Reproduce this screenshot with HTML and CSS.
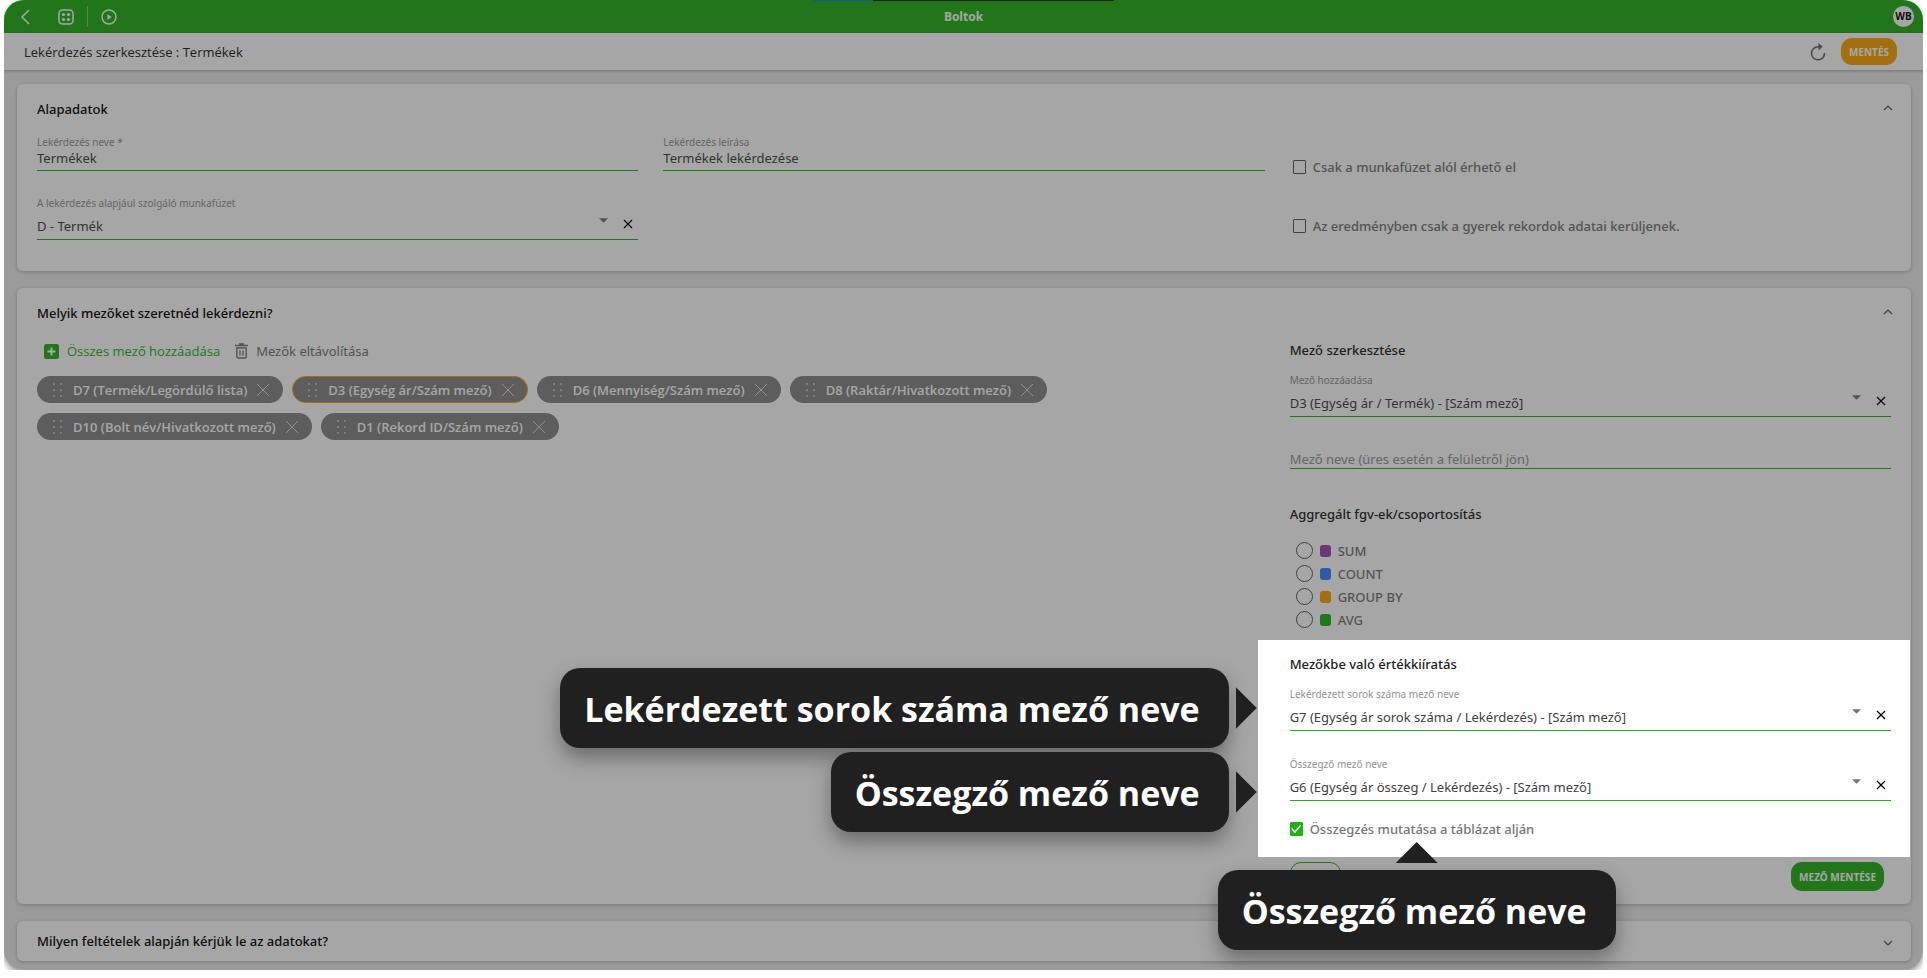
FILE: index.html
```
<!DOCTYPE html>
<html lang="hu">
<head>
<meta charset="utf-8">
<title>Boltok</title>
<link rel="stylesheet" href="styles.css">
</head>
<body>
<svg class="defs" aria-hidden="true">
  <symbol id="cross" viewBox="0 0 14 14"><path d="M1 1l12 12M13 1L1 13" fill="none" stroke="currentColor"/></symbol>
  <symbol id="clear" viewBox="0 0 10 10"><path d="M1 1l8 8M9 1L1 9" fill="none" stroke="currentColor" stroke-width="1.3"/></symbol>
  <symbol id="up" viewBox="0 0 10 7"><path d="M1 6l4-4 4 4" fill="none" stroke="currentColor" stroke-width="1.2"/></symbol>
  <symbol id="down" viewBox="0 0 10 7"><path d="M1 1l4 4 4-4" fill="none" stroke="currentColor" stroke-width="1.2"/></symbol>
  <symbol id="caret" viewBox="0 0 10 5"><path d="M0 0h10L5 5z" fill="currentColor"/></symbol>
  <symbol id="grip" viewBox="0 0 10 16"><path d="M0 1h2v2H0zM7 1h2v2H7zM0 7h2v2H0zM7 7h2v2H7zM0 13h2v2H0zM7 13h2v2H7z" fill="currentColor"/></symbol>
</svg>
<div class="frame">
  <div class="strip"></div>
  <header class="topbar">
    <nav class="topbar-nav">
      <button class="icon-btn back" type="button"><svg width="10" height="16" viewBox="0 0 10 16"><path d="M9 1L2 8l7 7" fill="none" stroke="currentColor" stroke-width="1.5"/></svg></button>
      <button class="icon-btn apps" type="button"><svg width="16" height="16" viewBox="0 0 16 16"><rect x="1" y="1" width="14" height="14" rx="3.500" fill="none" stroke="currentColor" stroke-width="1.5"/><g fill="currentColor"><circle cx="5.500" cy="5.500" r="1.600"/><circle cx="10.500" cy="5.500" r="1.600"/><circle cx="5.500" cy="10.500" r="1.600"/><circle cx="10.500" cy="10.500" r="1.600"/></g></svg></button>
      <button class="icon-btn play" type="button"><svg width="16" height="16" viewBox="0 0 16 16"><circle cx="8" cy="8" r="7" fill="none" stroke="currentColor" stroke-width="1.5"/><path d="M6.500 5l4 3-4 3z" fill="currentColor"/></svg></button>
    </nav>
    <h1 class="topbar-title">Boltok</h1>
    <button class="avatar" type="button">WB</button>
  </header>
  <div class="subbar">
    <h2 class="subbar-title">Lekérdezés szerkesztése : Termékek</h2>
    <div class="subbar-actions">
      <button class="icon-btn" type="button"><svg width="16" height="18" viewBox="0 0 16 18"><path d="M10.500 3.800H8A6.500 6.500 0 1 0 14.500 10" fill="none" stroke="currentColor" stroke-width="1.600"/><path d="M8.500 0l4.200 3.800-4.200 3.800z" fill="currentColor"/></svg></button>
      <button class="btn btn-save" type="button">MENTÉS</button>
    </div>
  </div>
  <main class="page">
    <section class="card">
      <header class="card-head"><h3 class="card-title">Alapadatok</h3><button class="icon-btn toggle" type="button"><svg width="10" height="7"><use href="#up"/></svg></button></header>
      <div class="columns base">
        <div class="field"><label class="label" for="name">Lekérdezés neve *</label><input class="text" id="name" value="Termékek"></div>
        <div class="field"><label class="label" for="desc">Lekérdezés leírása</label><input class="text" id="desc" value="Termékek lekérdezése"></div>
        <div class="checks">
          <label class="check"><input type="checkbox">Csak a munkafüzet alól érhető el</label>
          <label class="check"><input type="checkbox">Az eredményben csak a gyerek rekordok adatai kerüljenek.</label>
        </div>
        <div class="field">
          <label class="label" for="book">A lekérdezés alapjául szolgáló munkafüzet</label>
          <div class="picker"><select id="book"><option>D - Termék</option></select><svg class="caret" width="9" height="5"><use href="#caret"/></svg><button class="clear" type="button"><svg width="10" height="10"><use href="#clear"/></svg></button></div>
        </div>
      </div>
    </section>

    <section class="card">
      <header class="card-head"><h3 class="card-title">Melyik mezőket szeretnéd lekérdezni?</h3><button class="icon-btn toggle" type="button"><svg width="10" height="7"><use href="#up"/></svg></button></header>
      <div class="columns">
        <div class="chosen">
          <div class="actions">
            <button class="action add" type="button"><svg width="15" height="15" viewBox="0 0 15 15"><rect width="15" height="15" rx="2.500" fill="currentColor"/><path class="plus" d="M7.500 3.500v8M3.500 7.500h8" stroke-width="2"/></svg>Összes mező hozzáadása</button>
            <button class="action" type="button"><svg width="13" height="16" viewBox="0 0 13 16"><path d="M0 2.500h13M4 1h5M1.800 5h9.400v8.500a1.500 1.500 0 0 1-1.500 1.500h-6.400a1.500 1.500 0 0 1-1.500-1.500zM5 7.500v5M8 7.500v5" fill="none" stroke="currentColor" stroke-width="1.400"/></svg>Mezők eltávolítása</button>
          </div>
          <ul class="chips">
            <li class="chip"><svg class="grip" width="10" height="16"><use href="#grip"/></svg>D7 (Termék/Legördülő lista)<button class="remove" type="button"><svg width="14" height="14"><use href="#cross"/></svg></button></li>
            <li class="chip chip-active"><svg class="grip" width="10" height="16"><use href="#grip"/></svg>D3 (Egység ár/Szám mező)<button class="remove" type="button"><svg width="14" height="14"><use href="#cross"/></svg></button></li>
            <li class="chip"><svg class="grip" width="10" height="16"><use href="#grip"/></svg>D6 (Mennyiség/Szám mező)<button class="remove" type="button"><svg width="14" height="14"><use href="#cross"/></svg></button></li>
            <li class="chip"><svg class="grip" width="10" height="16"><use href="#grip"/></svg>D8 (Raktár/Hivatkozott mező)<button class="remove" type="button"><svg width="14" height="14"><use href="#cross"/></svg></button></li>
            <li class="chip"><svg class="grip" width="10" height="16"><use href="#grip"/></svg>D10 (Bolt név/Hivatkozott mező)<button class="remove" type="button"><svg width="14" height="14"><use href="#cross"/></svg></button></li>
            <li class="chip"><svg class="grip" width="10" height="16"><use href="#grip"/></svg>D1 (Rekord ID/Szám mező)<button class="remove" type="button"><svg width="14" height="14"><use href="#cross"/></svg></button></li>
          </ul>
        </div>
        <div class="editor">
          <h4 class="group-title">Mező szerkesztése</h4>
          <div class="field first">
            <label class="label" for="add">Mező hozzáadása</label>
            <div class="picker"><select id="add"><option>D3 (Egység ár / Termék) - [Szám mező]</option></select><svg class="caret" width="9" height="5"><use href="#caret"/></svg><button class="clear" type="button"><svg width="10" height="10"><use href="#clear"/></svg></button></div>
          </div>
          <input class="text rename" placeholder="Mező neve (üres esetén a felületről jön)">
          <h4 class="group-title">Aggregált fgv-ek/csoportosítás</h4>
          <div class="radios">
            <label class="radio"><input type="radio" name="agg"><span class="swatch sum"></span>SUM</label>
            <label class="radio"><input type="radio" name="agg"><span class="swatch count"></span>COUNT</label>
            <label class="radio"><input type="radio" name="agg"><span class="swatch group"></span>GROUP BY</label>
            <label class="radio"><input type="radio" name="agg"><span class="swatch avg"></span>AVG</label>
          </div>
          <section class="spotlight">
            <h4 class="group-title">Mezőkbe való értékkiíratás</h4>
            <div class="field first">
              <label class="label" for="rows">Lekérdezett sorok száma mező neve</label>
              <div class="picker"><select id="rows"><option>G7 (Egység ár sorok száma / Lekérdezés) - [Szám mező]</option></select><svg class="caret" width="9" height="5"><use href="#caret"/></svg><button class="clear" type="button"><svg width="10" height="10"><use href="#clear"/></svg></button></div>
            </div>
            <div class="field second">
              <label class="label" for="total">Összegző mező neve</label>
              <div class="picker"><select id="total"><option>G6 (Egység ár összeg / Lekérdezés) - [Szám mező]</option></select><svg class="caret" width="9" height="5"><use href="#caret"/></svg><button class="clear" type="button"><svg width="10" height="10"><use href="#clear"/></svg></button></div>
            </div>
            <label class="check show-total"><input type="checkbox" checked>Összegzés mutatása a táblázat alján</label>
            <div class="callout callout-rows">Lekérdezett sorok száma mező neve</div>
            <div class="callout callout-total">Összegző mező neve</div>
            <div class="callout callout-below">Összegző mező neve</div>
          </section>
          <div class="buttons"><button class="btn btn-outline" type="button"></button><button class="btn btn-field" type="button">MEZŐ MENTÉSE</button></div>
        </div>
      </div>
    </section>

    <section class="card">
      <header class="card-head closed"><h3 class="card-title">Milyen feltételek alapján kérjük le az adatokat?</h3><button class="icon-btn toggle" type="button"><svg width="10" height="7"><use href="#down"/></svg></button></header>
    </section>
  </main>
</div>
</body>
</html>
```
FILE: styles.css
```
:root {
  --green: #22b014;
  --orange: #fca303;
  --ink: #202020;
  --muted: #757575;
}
* { box-sizing: border-box; }
body {
  margin: 0 4px 8px;
  background: #fff;
  color: #000;
  font: 500 13px/20px "Noto Sans", "Open Sans", sans-serif;
}
h1, h2, h3, h4, ul { margin: 0; padding: 0; font: inherit; }
button, input, select { font: inherit; color: inherit; margin: 0; padding: 0; border: 0; background: none; border-radius: 0; }
svg { display: block; flex: none; }
.defs { position: absolute; width: 0; height: 0; }

.frame {
  position: relative;
  overflow: hidden;
  border-radius: 20px;
  background: #ededed;
  box-shadow: 0 3px 6px rgba(0, 0, 0, .45);
}
.strip {
  position: absolute;
  z-index: 6;
  top: 0;
  left: 50%;
  width: 301px;
  height: 1px;
  margin-left: -151px;
  background: linear-gradient(to right, #12589c 60px, var(--ink) 60px);
}

/* Top bars */
.topbar {
  display: grid;
  grid-template-columns: 1fr auto 1fr;
  align-items: center;
  height: 33px;
  padding: 0 9px;
  background: var(--green);
  color: #fff;
}
.topbar-nav { display: flex; align-items: center; height: 21px; padding-left: 7px; }
.topbar-title { font: 700 12px/20px "Open Sans", sans-serif; }
.icon-btn { display: flex; align-items: center; justify-content: center; }
.apps { margin-left: 28px; }
.play { margin-left: 13px; padding-left: 13px; height: 21px; border-left: 1px solid rgba(255, 255, 255, .4); }
.avatar {
  justify-self: end;
  width: 21px;
  height: 21px;
  border-radius: 50%;
  background: #fff;
  color: #000;
  font: 700 10px/21px "Open Sans", sans-serif;
}
.subbar {
  display: flex;
  align-items: center;
  justify-content: space-between;
  height: 37px;
  padding: 0 26px 0 20px;
  background: #fff;
  box-shadow: 0 1px 3px rgba(0, 0, 0, .3);
}
.subbar-title { font: 500 13px/20px "Open Sans", sans-serif; color: var(--ink); }
.subbar-actions { display: flex; align-items: center; gap: 15px; color: #666; }

.btn {
  font: 700 10px/20px "Noto Sans", sans-serif;
  color: #fff;
  border-radius: 11px;
  white-space: nowrap;
}
.btn-save { height: 27px; padding: 0 8px; background: var(--orange); }
.btn-field { height: 29px; padding: 0 8px; background: var(--green); }
.btn-outline { width: 51px; height: 29px; border: 1px solid var(--green); }

/* Cards */
.page { display: flex; flex-direction: column; gap: 17px; padding: 14px 12px 9px 13px; }
.card { background: #fff; border-radius: 6px; box-shadow: 0 1px 4px rgba(0, 0, 0, .25); padding: 0 20px; }
.card-head { display: flex; align-items: center; justify-content: space-between; height: 50px; }
.closed { height: 40px; }
.toggle { width: 10px; margin: 0 -2px 4px 0; color: #555; }
.closed .toggle { margin: 4px -2px 0 0; }
.columns { display: grid; grid-template-columns: repeat(3, minmax(0, 1fr)); column-gap: 25px; }
.base { row-gap: 25px; padding: 1px 0 31px; }

/* Fields */
.label { display: block; font-weight: 400; font-size: 10px; line-height: 14px; color: #949494; }
.text, .picker { width: 100%; border-bottom: 1px solid var(--green); font-weight: 400; color: #404040; }
.text { display: block; height: 22px; padding-bottom: 3px; outline: 0; }
.text::placeholder { color: #949494; opacity: 1; }
.picker { display: flex; align-items: center; height: 30px; }
.picker select { flex: 1; min-width: 0; height: 29px; padding-top: 3px; appearance: none; outline: 0; }
.caret { align-self: flex-start; margin: 8px 15px 0 0; color: #757575; }
.clear { margin: 0 5px 2px 0; color: #000; }

.checks { grid-row: span 2; display: flex; flex-direction: column; align-items: flex-start; gap: 39px; padding: 22px 0 0 3px; }
.check { display: flex; align-items: center; gap: 7px; color: var(--muted); }
.check input { appearance: none; width: 13px; height: 14px; border: 1px solid #555; border-radius: 1px; }
.check input:checked { border-color: var(--green); background: var(--green); display: grid; place-items: center; }
.check input:checked::before { content: ""; width: 10px; height: 9px; background: #fff; clip-path: polygon(0 50%, 10% 40%, 37% 72%, 90% 5%, 100% 15%, 38% 98%); }

/* Chosen fields */
.chosen { grid-column: span 2; }
.actions { display: flex; gap: 15px; height: 26px; padding-left: 7px; }
.action { display: flex; align-items: center; gap: 8px; color: var(--muted); font-weight: 400; }
.add { color: var(--green); font: 500 13px/20px "Open Sans", sans-serif; }
.plus { stroke: #fff; }
.chips { display: flex; flex-wrap: wrap; gap: 10px 9px; padding-top: 12px; list-style: none; }
.chip {
  display: flex;
  align-items: center;
  height: 27px;
  padding: 0 12px 0 15px;
  border: 1px solid transparent;
  border-radius: 14px;
  background: #858585 border-box;
  color: #fff;
  font: 600 13px/20px "Open Sans", sans-serif;
  white-space: nowrap;
}
.chip-active { border-color: var(--orange); }
.grip { margin-right: 10px; color: #bbb; }
.remove { margin-left: 9px; color: #ddd; }

/* Field editor */
.group-title { line-height: 24px; color: var(--ink); }
.first { margin-top: 11px; }
.second { margin-top: 26px; }
.rename { height: 19px; padding: 0; margin: 33px 0; }
.radios { padding: 13px 0 9px 6px; }
.radio { display: flex; align-items: center; height: 23px; gap: 7px; color: var(--muted); }
.radio input { appearance: none; width: 17px; height: 17px; border: 1px solid #555; border-radius: 50%; }
.swatch { width: 11px; height: 12px; border-radius: 3px; }
.sum { background: #9b46b8; }
.count { background: #3384fc; }
.group { background: var(--orange); }
.avg { background: var(--green); }

.spotlight {
  position: relative;
  z-index: 5;
  margin: 0 -19px 0 -32px;
  padding: 12px 19px 18px 32px;
  background: #fff;
  box-shadow: 0 0 0 3000px rgba(32, 32, 32, .4);
}
.show-total { margin-top: 18px; }
.buttons { display: flex; justify-content: space-between; padding: 5px 7px 13px 0; }

/* Callouts */
.callout {
  position: absolute;
  padding: 17px 29px 15px 24px;
  border-radius: 20px;
  background: var(--ink);
  color: #fff;
  font: 700 34px/48px "Open Sans", "Noto Sans", sans-serif;
  white-space: nowrap;
  box-shadow: 0 10px 20px rgba(0, 0, 0, .35);
}
.callout::after { content: ""; position: absolute; background: var(--ink); }
.callout-rows, .callout-total { right: calc(100% + 29px); }
.callout-rows { top: 28px; }
.callout-total { top: 112px; }
.callout-rows::after, .callout-total::after {
  left: calc(100% + 7px);
  top: 19px;
  width: 21px;
  height: 42px;
  clip-path: polygon(0 0, 100% 50%, 0 100%);
}
.callout-below { left: -40px; top: 230px; }
.callout-below::after {
  left: 50%;
  bottom: calc(100% + 7px);
  width: 42px;
  height: 21px;
  margin-left: -21px;
  clip-path: polygon(50% 0, 100% 100%, 0 100%);
}
```
